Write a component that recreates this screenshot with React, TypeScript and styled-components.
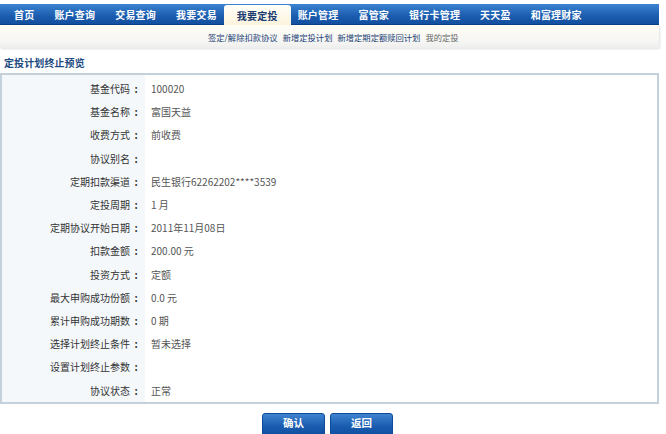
import React from 'react'
import styled, { createGlobalStyle } from 'styled-components'

const GlobalStyle = createGlobalStyle`
  html, body {
    margin: 0;
    padding: 0;
    background: #ffffff;
    font-family: "Noto Sans CJK SC", "Liberation Sans", sans-serif;
    font-size: 10px;
    color: #333;
  }
`

const Page = styled.div`
  width: 666px;
  height: 434px;
  overflow: hidden;
  padding-top: 4px;
  box-sizing: border-box;
`

const NavBar = styled.nav`
  display: flex;
  align-items: flex-end;
  width: 659px;
  height: 21px;
  padding-left: 4px;
  box-sizing: border-box;
  background: linear-gradient(#3b84d2, #1c5cae 60%, #134f9f);
  border-bottom: 1px solid #0c3f86;
`

const NavItem = styled.a<{ $active?: boolean }>`
  display: flex;
  align-items: center;
  height: ${({ $active }) => ($active ? '20px' : '100%')};
  padding: 0 ${({ $active }) => ($active ? '13px' : '10px')};
  margin: 0 ${({ $active }) => ($active ? '-3px' : '0')};
  font-size: 10px;
  letter-spacing: 0.2px;
  font-weight: bold;
  white-space: nowrap;
  color: ${({ $active }) => ($active ? '#1a3c70' : '#ffffff')};
  background: ${({ $active }) => ($active ? 'linear-gradient(#fffefa, #fdf3dc)' : 'transparent')};
  border-radius: ${({ $active }) => ($active ? '3px 3px 0 0' : '0')};
  margin-bottom: ${({ $active }) => ($active ? '-1px' : '0')};
  cursor: pointer;
`

const SubNav = styled.div`
  display: flex;
  align-items: center;
  gap: 5px;
  width: 659px;
  height: 23px;
  padding-left: 208px;
  box-sizing: border-box;
  background: linear-gradient(#fffdf5, #f6f6f4 70%, #eeeeee);
  box-shadow: 1px 1px 2px rgba(0, 0, 0, 0.12);
`

const SubLink = styled.a<{ $muted?: boolean }>`
  font-size: 8.3px;
  color: ${({ $muted }) => ($muted ? '#666' : '#1b3f74')};
  white-space: nowrap;
  cursor: pointer;
`

const Title = styled.h2`
  margin: 0;
  height: 24px;
  padding: 4px 0 0 4px;
  box-sizing: border-box;
  display: flex;
  align-items: center;
  font-size: 10px;
  font-weight: bold;
  letter-spacing: 0.1px;
  color: #1c4a80;
`

const Panel = styled.div`
  display: grid;
  grid-template-columns: 143px 1fr;
  grid-auto-rows: 23.2px;
  width: 659px;
  box-sizing: border-box;
  border: 2px solid #c4d1db;
  padding-top: 2px;
  margin-top: 1px;
  background: linear-gradient(to right, #f5f8fb 143px, #ffffff 143px);
`

const Label = styled.div`
  display: flex;
  align-items: center;
  justify-content: flex-end;
  padding-right: 3px;
  color: #333;
  white-space: nowrap;
`

const Colon = styled.span`
  display: inline-block;
  width: 12px;
  text-align: center;
  font-weight: bold;
`

const Value = styled.div`
  display: flex;
  align-items: center;
  padding-left: 6px;
  color: #555;
  white-space: nowrap;
`

const Actions = styled.div`
  display: flex;
  justify-content: center;
  gap: 5px;
  width: 655px;
  padding-top: 9px;
`

const Button = styled.button`
  width: 63px;
  height: 24px;
  border: 1px solid #0d4a97;
  border-radius: 3px 3px 0 0;
  background: linear-gradient(#3f83cf, #1a5cb0 55%, #0f4d9f);
  color: #ffffff;
  font-family: inherit;
  font-size: 10.5px;
  font-weight: bold;
  padding: 0 0 4px;
  cursor: pointer;
`

const navItems = ['首页', '账户查询', '交易查询', '我要交易', '我要定投', '账户管理', '富管家', '银行卡管理', '天天盈', '和富理财家']

const subLinks = ['签定/解除扣款协议', '新增定投计划', '新增定期定额赎回计划']

const details: [string, string][] = [
  ['基金代码', '100020'],
  ['基金名称', '富国天益'],
  ['收费方式', '前收费'],
  ['协议别名', ''],
  ['定期扣款渠道', '民生银行62262202****3539'],
  ['定投周期', '1 月'],
  ['定期协议开始日期', '2011年11月08日'],
  ['扣款金额', '200.00 元'],
  ['投资方式', '定额'],
  ['最大申购成功份额', '0.0 元'],
  ['累计申购成功期数', '0 期'],
  ['选择计划终止条件', '暂未选择'],
  ['设置计划终止参数', ''],
  ['协议状态', '正常'],
]

export default function App() {
  return (
    <>
      <GlobalStyle />
      <Page>
        <NavBar>
          {navItems.map((item) => (
            <NavItem key={item} $active={item === '我要定投'}>
              {item}
            </NavItem>
          ))}
        </NavBar>
        <SubNav>
          {subLinks.map((link) => (
            <SubLink key={link}>{link}</SubLink>
          ))}
          <SubLink $muted>我的定投</SubLink>
        </SubNav>
        <Title>定投计划终止预览</Title>
        <Panel>
          {details.map(([label, value]) => (
            <React.Fragment key={label}>
              <Label>
                {label}
                <Colon>:</Colon>
              </Label>
              <Value>{value}</Value>
            </React.Fragment>
          ))}
        </Panel>
        <Actions>
          <Button>确认</Button>
          <Button>返回</Button>
        </Actions>
      </Page>
    </>
  )
}
